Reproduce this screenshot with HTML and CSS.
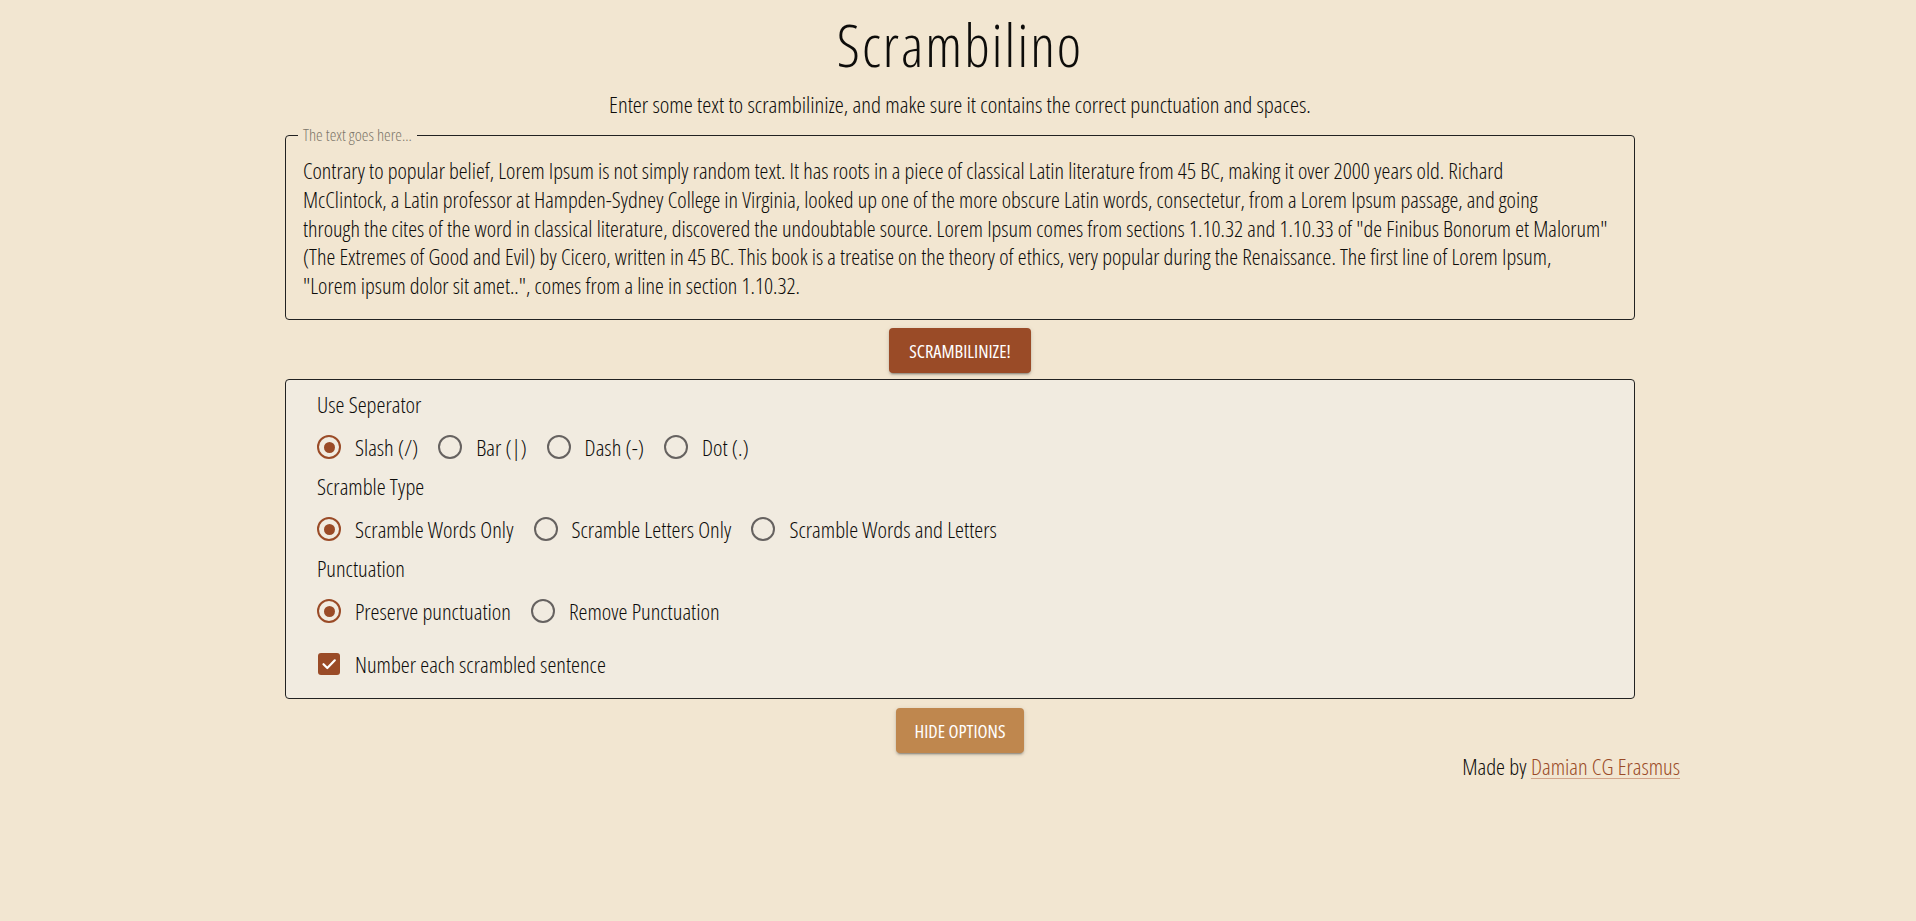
FILE: index.html
```html
<!DOCTYPE html>
<html lang="en">
<head>
<meta charset="utf-8">
<title>Scrambilino</title>
<link rel="stylesheet" href="styles.css">
</head>
<body>
<main class="page">
  <h1 class="title">Scrambilino</h1>
  <p class="subtitle">Enter some text to scrambilinize, and make sure it contains the correct punctuation and spaces.</p>

  <fieldset class="input-box">
    <legend class="input-legend">The text goes here...</legend>
    <textarea class="input-text" rows="5" wrap="off">Contrary to popular belief, Lorem Ipsum is not simply random text. It has roots in a piece of classical Latin literature from 45 BC, making it over 2000 years old. Richard
McClintock, a Latin professor at Hampden-Sydney College in Virginia, looked up one of the more obscure Latin words, consectetur, from a Lorem Ipsum passage, and going
through the cites of the word in classical literature, discovered the undoubtable source. Lorem Ipsum comes from sections 1.10.32 and 1.10.33 of "de Finibus Bonorum et Malorum"
(The Extremes of Good and Evil) by Cicero, written in 45 BC. This book is a treatise on the theory of ethics, very popular during the Renaissance. The first line of Lorem Ipsum,
"Lorem ipsum dolor sit amet..", comes from a line in section 1.10.32.</textarea>
  </fieldset>

  <div class="actions">
    <button class="btn btn-primary" type="button">Scrambilinize!</button>
  </div>

  <section class="options">
    <div class="group-label">Use Seperator</div>
    <div class="radio-row">
      <label class="choice"><span class="radio checked"></span>Slash (/)</label>
      <label class="choice"><span class="radio"></span>Bar (|)</label>
      <label class="choice"><span class="radio"></span>Dash (-)</label>
      <label class="choice"><span class="radio"></span>Dot (.)</label>
    </div>

    <div class="group-label">Scramble Type</div>
    <div class="radio-row">
      <label class="choice"><span class="radio checked"></span>Scramble Words Only</label>
      <label class="choice"><span class="radio"></span>Scramble Letters Only</label>
      <label class="choice"><span class="radio"></span>Scramble Words and Letters</label>
    </div>

    <div class="group-label">Punctuation</div>
    <div class="radio-row">
      <label class="choice"><span class="radio checked"></span>Preserve punctuation</label>
      <label class="choice"><span class="radio"></span>Remove Punctuation</label>
    </div>

    <div class="check-row">
      <label class="choice">
        <span class="checkbox">
          <svg viewBox="0 0 22 22" width="22" height="22"><path d="M5.5 11.2 L9.3 15 L16.8 7.3" fill="none" stroke="#ffffff" stroke-width="2.2" stroke-linecap="round" stroke-linejoin="round"/></svg>
        </span>Number each scrambled sentence
      </label>
    </div>
  </section>

  <div class="actions actions-secondary">
    <button class="btn btn-secondary" type="button">Hide Options</button>
  </div>

  <footer class="footer">Made by <a class="footer-link" href="#">Damian CG Erasmus</a></footer>
</main>
</body>
</html>
```

FILE: styles.css
```css
* { box-sizing: border-box; }

html, body {
  margin: 0;
  padding: 0;
  background: #f2e6d1;
  color: #0d0c0a;
  font-family: "Open Sans", "Lato", sans-serif;
  font-weight: 300;
  font-stretch: condensed;
}

.page {
  display: flex;
  flex-direction: column;
  align-items: center;
  padding: 11px 0 0 4px;
}

.title {
  margin: 0;
  font-size: 58px;
  line-height: 67px;
  font-weight: 300;
  letter-spacing: 2px;
}

.subtitle {
  margin: 13px 0 0;
  font-size: 22.8px;
  line-height: 28px;
  font-weight: 300;
}

.input-box {
  width: 1350px;
  margin: 9px 0 0;
  padding: 0 0 0 17px;
  border: 1px solid #222;
  border-radius: 4px;
  min-width: 0;
}

.input-legend {
  font-size: 16.8px;
  line-height: 14px;
  color: #7d766a;
  padding: 0 5px;
  margin-left: -5px;
}

.input-text {
  display: block;
  width: 100%;
  height: 177px;
  padding: 15px 14px 18px 0;
  margin: 0;
  border: none;
  outline: none;
  resize: none;
  overflow: hidden;
  white-space: pre;
  background: transparent;
  color: #0d0c0a;
  font-family: inherit;
  font-weight: 300;
  font-stretch: condensed;
  font-size: 22.3px;
  line-height: 28.8px;
}

.actions {
  margin-top: 8px;
  display: flex;
  justify-content: center;
}

.actions-secondary { margin-top: 9px; }

.btn {
  height: 45px;
  border: none;
  border-radius: 4px;
  color: #fff;
  font-family: inherit;
  font-weight: 400;
  font-stretch: condensed;
  font-size: 18.4px;
  text-transform: uppercase;
  padding: 0 6px;
  box-shadow: 0 3px 1px -2px rgba(0,0,0,0.2), 0 2px 2px 0 rgba(0,0,0,0.14), 0 1px 5px 0 rgba(0,0,0,0.12);
  cursor: pointer;
}

.btn-primary {
  background: #9a4b27;
  width: 142px;
}

.btn-secondary {
  background: #bf874e;
  width: 128px;
}

.options {
  width: 1350px;
  margin-top: 6px;
  background: #f1ebe0;
  border: 1px solid #222;
  border-radius: 4px;
  padding: 13px 20px 13px 31px;
  display: flex;
  flex-direction: column;
}

.group-label {
  font-size: 22.6px;
  line-height: 24px;
  margin-top: 7px;
}

.group-label:first-child { margin-top: 0; }

.radio-row {
  display: flex;
  align-items: center;
  height: 42px;
  margin-top: 9px;
}

.check-row {
  display: flex;
  align-items: center;
  height: 42px;
  margin-top: 11px;
}

.choice {
  display: inline-flex;
  align-items: center;
  font-size: 22.6px;
  margin-right: 20px;
  white-space: nowrap;
}

.radio {
  width: 24px;
  height: 24px;
  border-radius: 50%;
  border: 2.5px solid #666260;
  margin-right: 14px;
  display: inline-flex;
  align-items: center;
  justify-content: center;
  flex: none;
}

.radio.checked { border-color: #9a4b27; }

.radio.checked::after {
  content: "";
  width: 11px;
  height: 11px;
  border-radius: 50%;
  background: #9a4b27;
}

.checkbox {
  width: 22px;
  height: 22px;
  border-radius: 3px;
  background: #9a4b27;
  margin: 0 15px 0 1px;
  display: inline-flex;
  flex: none;
}

.footer {
  align-self: flex-end;
  margin-right: 236px;
  margin-top: 2px;
  font-size: 22.6px;
  line-height: 24px;
}

.footer-link {
  color: #9a4b27;
  text-decoration: underline;
  text-decoration-color: #d2a58a;
  text-underline-offset: 3px;
}
```
